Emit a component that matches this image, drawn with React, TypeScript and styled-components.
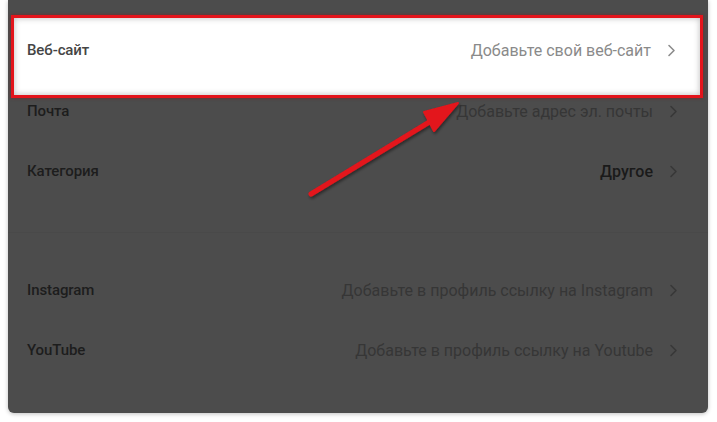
import styled, { createGlobalStyle } from "styled-components"

const GlobalStyle = createGlobalStyle`
  html, body {
    margin: 0;
    padding: 0;
    background: #ffffff;
  }
  body {
    font-family: Roboto, "Noto Sans", "Liberation Sans", sans-serif;
  }
`

type Item = {
  label: string
  value: string
  strong?: boolean
}

const mainItems: Item[] = [
  { label: "Почта", value: "Добавьте адрес эл. почты" },
  { label: "Категория", value: "Другое", strong: true },
]

const socialItems: Item[] = [
  { label: "Instagram", value: "Добавьте в профиль ссылку на Instagram" },
  { label: "YouTube", value: "Добавьте в профиль ссылку на Youtube" },
]

function Chevron({ color }: { color: string }) {
  return (
    <svg width="9" height="13" viewBox="0 0 9 13" fill="none">
      <path d="M2 1.5 L7 6.5 L2 11.5" stroke={color} strokeWidth="1.6" strokeLinecap="round" strokeLinejoin="round" />
    </svg>
  )
}

function Arrow() {
  return (
    <ArrowSvg width="170" height="110" viewBox="0 0 170 110">
      <defs>
        <filter id="arrow-shadow" x="-20%" y="-20%" width="140%" height="140%">
          <feDropShadow dx="1" dy="2" stdDeviation="1.5" floodColor="#000" floodOpacity="0.45" />
        </filter>
      </defs>
      <g filter="url(#arrow-shadow)">
        <line x1="10" y1="95" x2="130" y2="22" stroke="#e3141b" strokeWidth="5" strokeLinecap="round" />
        <path d="M157 4 L123 13 L133 32 Z" fill="#e3141b" stroke="#e3141b" strokeWidth="2" strokeLinejoin="round" />
      </g>
    </ArrowSvg>
  )
}

function App() {
  return (
    <>
      <GlobalStyle />
      <Page>
        <Panel>
          <HighlightRow>
            <Label $highlight>Веб-сайт</Label>
            <ValueWrap>
              <Value $tone="light">Добавьте свой веб-сайт</Value>
              <Chevron color="#8c8c8c" />
            </ValueWrap>
          </HighlightRow>

          {mainItems.map((item) => (
            <Row key={item.label}>
              <Label>{item.label}</Label>
              <ValueWrap>
                <Value $tone={item.strong ? "strong" : "dim"}>{item.value}</Value>
                <Chevron color="#383838" />
              </ValueWrap>
            </Row>
          ))}

          <Divider />

          {socialItems.map((item) => (
            <Row key={item.label}>
              <Label>{item.label}</Label>
              <ValueWrap>
                <Value $tone="dim">{item.value}</Value>
                <Chevron color="#383838" />
              </ValueWrap>
            </Row>
          ))}

          <Arrow />
        </Panel>
      </Page>
    </>
  )
}

const Page = styled.div`
  width: 717px;
  height: 422px;
  box-sizing: border-box;
  padding: 0 9px 9px 8px;
  background: #ffffff;
  overflow: hidden;
`

const Panel = styled.div`
  position: relative;
  height: 413px;
  box-sizing: border-box;
  padding-top: 20px;
  background: #4c4c4c;
  border-radius: 0 0 6px 6px;
  box-shadow: 0 1px 4px rgba(0, 0, 0, 0.25);
  display: flex;
  flex-direction: column;
`

const Row = styled.div`
  height: 60px;
  flex-shrink: 0;
  display: flex;
  align-items: center;
  justify-content: space-between;
  padding: 0 30px 0 19px;
`

const HighlightRow = styled(Row)`
  position: relative;
  z-index: 1;
  margin: -5px 5px -17px 3px;
  padding: 2px 24px 15px 13px;
  background: #ffffff;
  border: 3px solid #e3141b;
  box-shadow: inset 0 0 6px rgba(0, 0, 0, 0.28), 0 0 3px rgba(160, 0, 0, 0.5);
`

const Label = styled.span<{ $highlight?: boolean }>`
  font-size: 15px;
  font-weight: 500;
  letter-spacing: -0.1px;
  color: ${({ $highlight }) => ($highlight ? "#454545" : "#1d1d1d")};
`

const ValueWrap = styled.div`
  display: flex;
  align-items: center;
  gap: 16px;
`

const Value = styled.span<{ $tone: "light" | "dim" | "strong" }>`
  font-size: 16px;
  font-weight: ${({ $tone }) => ($tone === "strong" ? 500 : 400)};
  color: ${({ $tone }) =>
    $tone === "light" ? "#8a8a8a" : $tone === "strong" ? "#1a1a1a" : "#363636"};
`

const Divider = styled.div`
  height: 1px;
  flex-shrink: 0;
  margin: 31px 0 27px;
  background: #494949;
`

const ArrowSvg = styled.svg`
  position: absolute;
  left: 293px;
  top: 99px;
  overflow: visible;
  z-index: 2;
`

export default App
